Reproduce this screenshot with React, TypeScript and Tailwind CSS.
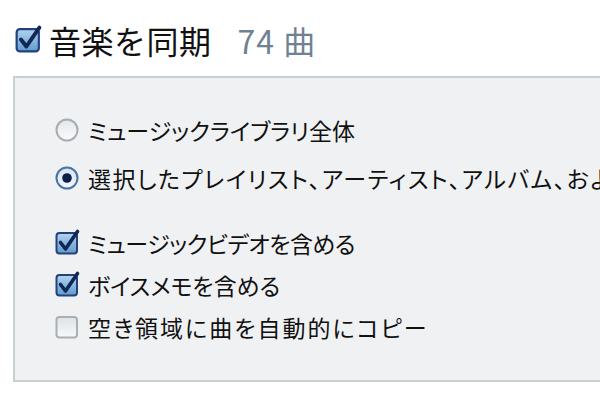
import { useId } from "react";

function CheckBox({ checked, size = 24 }: { checked: boolean; size?: number }) {
  const id = useId().replace(/:/g, "");
  return (
    <svg width={size} height={size} viewBox="0 0 24 24" className="shrink-0 overflow-visible">
      <defs>
        <linearGradient id={`cb${id}`} x1="0" y1="0" x2="0" y2="1">
          {checked ? (
            <>
              <stop offset="0" stopColor="#b3d4ee" />
              <stop offset="1" stopColor="#5f9bcc" />
            </>
          ) : (
            <>
              <stop offset="0" stopColor="#dfe3e6" />
              <stop offset="1" stopColor="#f7f8f9" />
            </>
          )}
        </linearGradient>
      </defs>
      <rect
        x="1.5"
        y="2"
        width="20.5"
        height="20.5"
        rx="3"
        fill={`url(#cb${id})`}
        stroke={checked ? "#23427c" : "#a8b0b6"}
        strokeWidth="2"
      />
      {checked && (
        <path
          d="M5.5 11.5 L10.5 18 L22.5 0.5"
          fill="none"
          stroke="#102757"
          strokeWidth="3.6"
          strokeLinecap="round"
          strokeLinejoin="round"
        />
      )}
    </svg>
  );
}

function Radio({ selected }: { selected: boolean }) {
  const id = useId().replace(/:/g, "");
  return (
    <svg width="24" height="24" viewBox="0 0 24 24" className="shrink-0">
      <defs>
        <linearGradient id={`rd${id}`} x1="0" y1="0" x2="0" y2="1">
          <stop offset="0" stopColor={selected ? "#d6e4f1" : "#e3e6e9"} />
          <stop offset="1" stopColor={selected ? "#f4f8fb" : "#fbfbfc"} />
        </linearGradient>
      </defs>
      <circle
        cx="12"
        cy="12"
        r="10.5"
        fill={`url(#rd${id})`}
        stroke={selected ? "#4873a6" : "#a6aeb4"}
        strokeWidth="2"
      />
      {selected && <circle cx="12" cy="12" r="4.8" fill="#0c1f4e" />}
    </svg>
  );
}

const radios = [
  { label: "ミュージックライブラリ全体", selected: false, wide: "" },
  {
    label: "選択したプレイリスト、アーティスト、アルバム、およびジャンル",
    selected: true,
    wide: "tracking-[1.5px]",
  },
];

const options = [
  { label: "ミュージックビデオを含める", checked: true, wide: "tracking-[-0.5px]" },
  { label: "ボイスメモを含める", checked: true, wide: "" },
  { label: "空き領域に曲を自動的にコピー", checked: false, wide: "tracking-[2px]" },
];

export default function App() {
  return (
    <div
      className="relative h-[400px] w-[600px] overflow-hidden bg-white text-[#111]"
      style={{ fontFamily: '"Noto Sans CJK JP", "Noto Sans", sans-serif' }}
    >
      <div className="flex h-[80px] items-start pl-[15px] pt-[24px]">
        <div className="flex h-[32px] items-center gap-[8px]">
          <CheckBox checked size={26} />
          <span className="whitespace-nowrap text-[32px] leading-[32px] tracking-[0.5px]">音楽を同期</span>
          <span className="ml-[18px] whitespace-nowrap text-[32px] leading-[32px] tracking-[1px] text-[#6f8193]">74 曲</span>
        </div>
      </div>

      <div className="-mt-[4px] ml-[13px] h-[306px] w-[640px] border-2 border-[#c8ced2] bg-[#f0f1f3] pl-[40px] pt-[28px] [font-feature-settings:'palt']">
        {radios.map((r) => (
          <div key={r.label} className="flex h-[48px] items-center gap-[9px]">
            <Radio selected={r.selected} />
            <span className={"whitespace-nowrap text-[23px] leading-[26px] " + r.wide}>{r.label}</span>
          </div>
        ))}
        <div className="mt-[20px]">
          {options.map((o) => (
            <div key={o.label} className="flex h-[42px] items-center gap-[9px]">
              <CheckBox checked={o.checked} />
              <span className={"whitespace-nowrap text-[23px] leading-[26px] " + o.wide}>{o.label}</span>
            </div>
          ))}
        </div>
      </div>
    </div>
  );
}
